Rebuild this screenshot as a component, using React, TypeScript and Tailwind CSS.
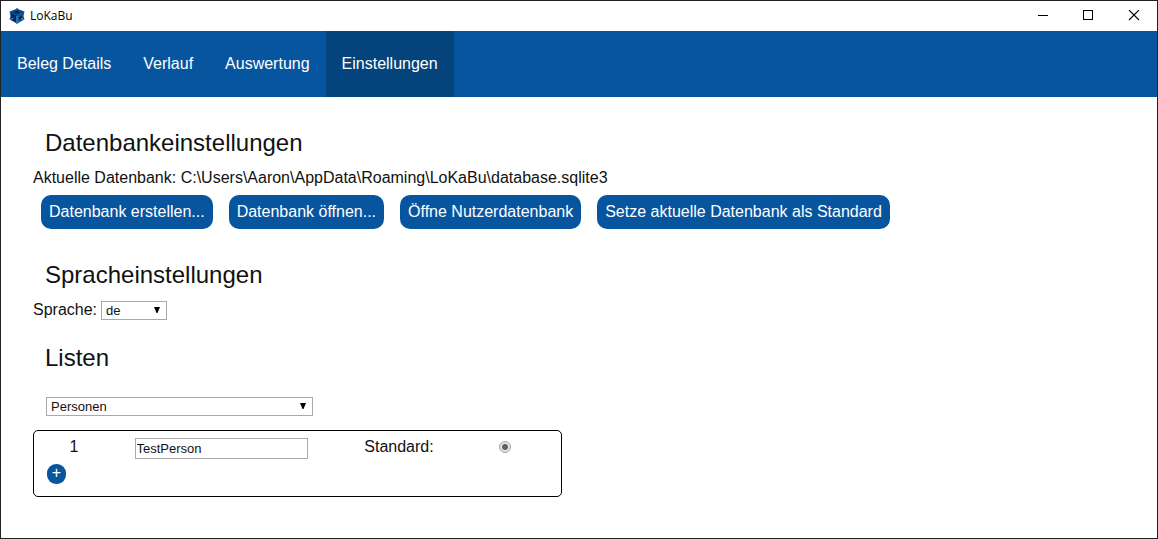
import { useState, type SelectHTMLAttributes } from "react";

const tabs = ["Beleg Details", "Verlauf", "Auswertung", "Einstellungen"];
const databaseActions = [
  "Datenbank erstellen...",
  "Datenbank öffnen...",
  "Öffne Nutzerdatenbank",
  "Setze aktuelle Datenbank als Standard",
];

function Logo() {
  return (
    <svg viewBox="0 0 16 16" className="mb-px size-4" aria-hidden="true">
      <path d="M8 0 10 1.500 15.500 3.500 14.500 8 15.500 11.500 10 14.500 8 16 6 14.500 .5 11.500 1.500 8 .5 3.500 6 1.500Z" fill="#12549a" />
      <path d="M8 1.500 14 4 8 7 2 4Z" fill="#0b4488" />
      <path d="M8 3 11 4.200 8 5.600 5 4.200Z" fill="#041f47" />
      <path d="M2 5 7.500 7.500v7L2 11.500Z" fill="#05285a" />
      <path d="M8.500 7.500 14 5v6.500l-5.500 3Z" fill="#12569c" />
      <path d="M10 9 13 7.500v3L10 12Z" fill="#051f49" />
      <path d="M8 8v7M1.500 11.500 4.500 10M14.500 11.500 12 10.500" fill="none" stroke="#4a9acb" />
    </svg>
  );
}

function TitleBar() {
  const control = "flex h-full w-[46px] items-center justify-center";
  return (
    <header className="flex h-[30px] items-center justify-between pl-2">
      <div className="flex items-center gap-[5px]">
        <Logo />
        <span className="font-['Open_Sans',sans-serif] text-[12px] leading-4 text-black">LoKaBu</span>
      </div>
      <div className="flex h-full">
        <button className={control} aria-label="Minimieren">
          <svg viewBox="0 0 12 12" className="size-3" shapeRendering="crispEdges">
            <path d="M2 5.500h10" stroke="#000" />
          </svg>
        </button>
        <button className={control} aria-label="Maximieren">
          <svg viewBox="0 0 12 12" className="size-3" shapeRendering="crispEdges">
            <path d="M1.500.5h9v9h-9z" fill="none" stroke="#000" />
          </svg>
        </button>
        <button className={control} aria-label="Schließen">
          <svg viewBox="0 0 12 12" className="size-3">
            <path d="m1 0 10 10M11 0 1 10" stroke="#000" strokeWidth="1.100" />
          </svg>
        </button>
      </div>
    </header>
  );
}

function Select({ className, ...props }: SelectHTMLAttributes<HTMLSelectElement>) {
  return (
    <div className={`relative ${className ?? ""}`}>
      <select
        {...props}
        className="block h-[19px] w-full appearance-none border border-[#a9a9a9] bg-white pr-5 pl-1 text-[13px] leading-[17px]"
      />
      <svg
        viewBox="0 0 6 6"
        className="pointer-events-none absolute top-[6px] right-[7px] size-[6px]"
        aria-hidden="true"
      >
        <path d="M0 0h6L3.500 6h-1z" fill="#000" />
      </svg>
    </div>
  );
}

function PersonList() {
  const [name, setName] = useState("TestPerson");
  return (
    <div className="mt-[14px] h-[67px] w-[529px] max-w-full rounded-[5px] border border-black pt-[6px] pr-2 pl-[13px]">
      <div className="grid grid-cols-[54px_240px_116px_1fr] items-center">
        <span className="pb-[2px] text-center leading-5">1</span>
        <div className="flex justify-center">
          <input
            aria-label="Name"
            value={name}
            onChange={(e) => setName(e.target.value)}
            className="h-[21px] w-[173px] border border-[#a9a9a9] px-px text-[13px]"
          />
        </div>
        <label htmlFor="standard" className="pb-[2px] text-center leading-5">
          Standard:
        </label>
        <div className="flex justify-center pb-[2px]">
          <input
            id="standard"
            type="radio"
            name="standard"
            defaultChecked
            className="size-3 appearance-none rounded-full border border-[#a3a3a3] bg-[#e4e4e4] bg-[radial-gradient(circle,#606060_0_2.500px,transparent_3.500px)]"
          />
        </div>
      </div>
      <button
        aria-label="Person hinzufügen"
        className="mt-[5px] flex h-5 w-[19px] items-start justify-center rounded-[9px] bg-[#07559f] text-[16px] leading-[17px] text-white"
      >
        +
      </button>
    </div>
  );
}

export default function App() {
  const [active, setActive] = useState("Einstellungen");
  const heading = "pl-3 text-[24px] leading-7";
  return (
    <div className="min-h-screen border border-[#222222] bg-white font-['Liberation_Sans',Arial,sans-serif] text-[16px] text-[#111111]">
      <TitleBar />
      <nav className="flex h-[66px] bg-[#07559f]">
        {tabs.map((tab) => (
          <button
            key={tab}
            onClick={() => setActive(tab)}
            className={`px-4 pb-px text-white ${active === tab ? "bg-[#05437d]" : ""}`}
          >
            {tab}
          </button>
        ))}
      </nav>
      <main className="px-8 pt-8 pb-10">
        <section>
          <h2 className={heading}>Datenbankeinstellungen</h2>
          <p className="mt-[11px] leading-5">
            Aktuelle Datenbank: C:\Users\Aaron\AppData\Roaming\LoKaBu\database.sqlite3
          </p>
          <div className="mt-[7px] flex flex-wrap gap-4 px-2">
            {databaseActions.map((action) => (
              <button key={action} className="h-[34px] rounded-[10px] bg-[#07559f] px-2 text-white">
                {action}
              </button>
            ))}
          </div>
        </section>
        <section className="mt-8">
          <h2 className={heading}>Spracheinstellungen</h2>
          <div className="mt-[11px] flex items-center gap-1">
            <label htmlFor="language" className="leading-5">
              Sprache:
            </label>
            <Select id="language" className="w-[66px]" defaultValue="de">
              <option>de</option>
              <option>en</option>
            </Select>
          </div>
        </section>
        <section className="mt-6">
          <h2 className={heading}>Listen</h2>
          <Select aria-label="Liste" className="mt-[25px] ml-[13px] w-[267px]" defaultValue="Personen">
            <option>Personen</option>
          </Select>
          <PersonList />
        </section>
      </main>
    </div>
  );
}
